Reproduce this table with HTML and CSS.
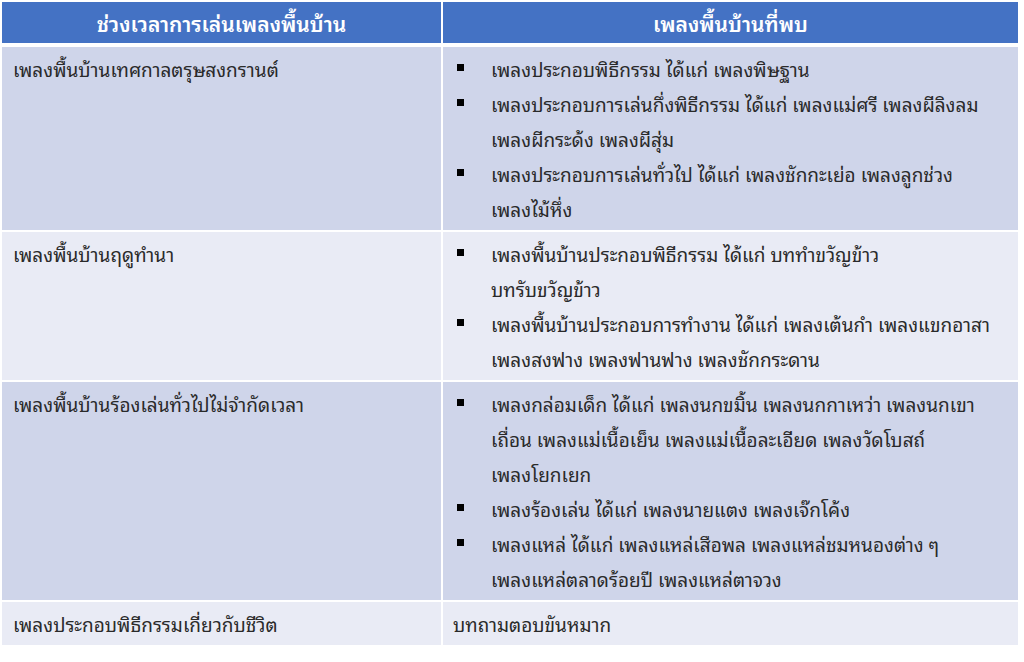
FILE: index.html
```html
<!DOCTYPE html>
<html lang="th">
<head>
<meta charset="utf-8">
<title>เพลงพื้นบ้าน</title>
<link rel="stylesheet" href="styles.css">
</head>
<body>
<div class="table">
  <div class="cell head">ช่วงเวลาการเล่นเพลงพื้นบ้าน</div>
  <div class="cell head">เพลงพื้นบ้านที่พบ</div>

  <div class="cell odd first">เพลงพื้นบ้านเทศกาลตรุษสงกรานต์</div>
  <div class="cell odd">
    <ul class="list">
      <li><span class="line">เพลงประกอบพิธีกรรม ได้แก่ เพลงพิษฐาน</span></li>
      <li><span class="line">เพลงประกอบการเล่นกึ่งพิธีกรรม ได้แก่ เพลงแม่ศรี เพลงผีลิงลม</span><span class="line">เพลงผีกระด้ง เพลงผีสุ่ม</span></li>
      <li><span class="line">เพลงประกอบการเล่นทั่วไป ได้แก่ เพลงชักกะเย่อ เพลงลูกช่วง</span><span class="line">เพลงไม้หึ่ง</span></li>
    </ul>
  </div>

  <div class="cell even first">เพลงพื้นบ้านฤดูทำนา</div>
  <div class="cell even">
    <ul class="list">
      <li><span class="line">เพลงพื้นบ้านประกอบพิธีกรรม ได้แก่ บททำขวัญข้าว</span><span class="line">บทรับขวัญข้าว</span></li>
      <li><span class="line">เพลงพื้นบ้านประกอบการทำงาน ได้แก่ เพลงเต้นกำ เพลงแขกอาสา</span><span class="line">เพลงสงฟาง เพลงฟานฟาง เพลงชักกระดาน</span></li>
    </ul>
  </div>

  <div class="cell odd first">เพลงพื้นบ้านร้องเล่นทั่วไปไม่จำกัดเวลา</div>
  <div class="cell odd">
    <ul class="list">
      <li><span class="line">เพลงกล่อมเด็ก ได้แก่ เพลงนกขมิ้น เพลงนกกาเหว่า เพลงนกเขา</span><span class="line">เถื่อน เพลงแม่เนื้อเย็น เพลงแม่เนื้อละเอียด เพลงวัดโบสถ์</span><span class="line">เพลงโยกเยก</span></li>
      <li><span class="line">เพลงร้องเล่น ได้แก่ เพลงนายแตง เพลงเจ๊กโค้ง</span></li>
      <li><span class="line">เพลงแหล่ ได้แก่ เพลงแหล่เสือพล เพลงแหล่ชมหนองต่าง ๆ</span><span class="line">เพลงแหล่ตลาดร้อยปี เพลงแหล่ตาจวง</span></li>
    </ul>
  </div>

  <div class="cell even first">เพลงประกอบพิธีกรรมเกี่ยวกับชีวิต</div>
  <div class="cell even plain">บทถามตอบขันหมาก</div>
</div>
</body>
</html>
```

FILE: styles.css
```css
html, body {
  margin: 0;
  padding: 0;
  background: #ffffff;
}

body {
  font-family: "Noto Sans Thai Looped", "Loma", "Garuda", "Noto Sans Thai", sans-serif;
  font-size: 19px;
  color: #2a2a2a;
}

.table {
  display: grid;
  grid-template-columns: 439px 575px;
  grid-template-rows: 43px auto auto auto auto;
  column-gap: 2px;
  row-gap: 2px;
  padding: 2px 0 0 2px;
  width: 1016px;
}

.cell {
  padding: 4px 10px 4px 11px;
  line-height: 35px;
}

.head {
  background: #4472c4;
  color: #ffffff;
  font-size: 21px;
  font-weight: 600;
  text-align: center;
  display: flex;
  align-items: center;
  justify-content: center;
  padding: 0;
  margin-bottom: 2px;
}

.odd {
  background: #cfd5ea;
}

.even {
  background: #e9ebf5;
}

.first {
  padding-left: 11px;
}

.plain {
  padding-left: 10px;
}

.list {
  list-style: none;
  margin: 0;
  padding: 0 0 0 3px;
}

.list li {
  position: relative;
  padding-left: 34px;
}

.list li::before {
  content: "";
  position: absolute;
  left: 0;
  top: 13px;
  width: 7px;
  height: 7px;
  background: #000000;
}

.line {
  display: block;
  white-space: nowrap;
}
```
